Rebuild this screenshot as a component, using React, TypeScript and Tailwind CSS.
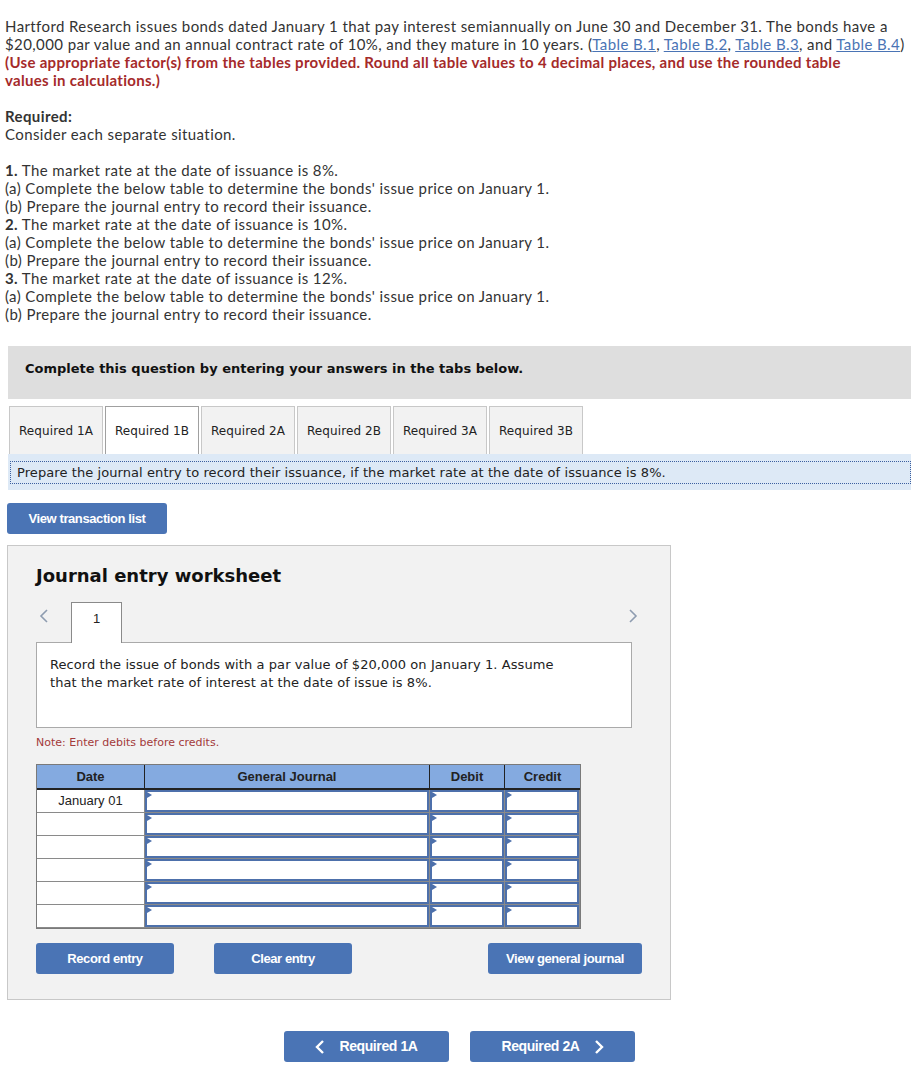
import React from 'react';

const tahoma = "font-['DejaVu_Sans',sans-serif]";
const narrow = "font-['Liberation_Sans_Narrow','Liberation_Sans',sans-serif]";

const tabs = ['Required 1A', 'Required 1B', 'Required 2A', 'Required 2B', 'Required 3A', 'Required 3B'];

const Chevron: React.FC<{ dir: 'left' | 'right'; color: string; w?: number }> = ({ dir, color, w = 1.6 }) => (
  <svg width="10" height="16" viewBox="0 0 10 16">
    <polyline
      points={dir === 'left' ? '8,2 2,8 8,14' : '2,2 8,8 2,14'}
      fill="none"
      stroke={color}
      strokeWidth={w}
    />
  </svg>
);

const InputCell: React.FC = () => (
  <div className="relative h-full border-r border-b border-[#8a8a8a] bg-white">
    <div className="h-full border-2 border-[#4d70ab]" />
    <span className="absolute top-[2px] left-[2px] w-0 h-0 border-y-[3px] border-y-transparent border-l-[5px] border-l-[#4d70ab]" />
  </div>
);

const BlueButton: React.FC<{ children: React.ReactNode; className?: string }> = ({ children, className = '' }) => (
  <button
    className={`h-[31px] rounded-[3px] bg-[#4a74b5] text-white text-[13px] tracking-[-0.4px] font-bold flex items-center justify-center ${narrow} ${className}`}
  >
    {children}
  </button>
);

const Link: React.FC<{ children: React.ReactNode }> = ({ children }) => (
  <span className="text-[#4a74b5] underline">{children}</span>
);

const App: React.FC = () => {
  return (
    <div className="w-[911px] min-h-[1072px] bg-white text-[#333] overflow-hidden">
      {/* question text */}
      <div className="pl-[5px] pt-[17px] font-['Lato',sans-serif] text-[15px] leading-[18px] tracking-[0.4px] whitespace-nowrap">
        <p>
          Hartford Research issues bonds dated January 1 that pay interest semiannually on June 30 and December 31. The bonds have a
          <br />
          $20,000 par value and an annual contract rate of 10%, and they mature in 10 years. <span>(</span>
          <Link>Table B.1</Link>, <Link>Table B.2</Link>, <Link>Table B.3</Link>, and <Link>Table B.4</Link>
          <span>)</span>
        </p>
        <p className="font-bold text-[#a52a2a] tracking-[0.3px]">
          (Use appropriate factor(s) from the tables provided. Round all table values to 4 decimal places, and use the rounded table
          <br />
          values in calculations.)
        </p>
        <p className="mt-[18px] font-bold">Required:</p>
        <p>Consider each separate situation.</p>
        <div className="mt-[18px]">
          <p><b>1.</b> The market rate at the date of issuance is 8%.</p>
          <p>(a) Complete the below table to determine the bonds' issue price on January 1.</p>
          <p>(b) Prepare the journal entry to record their issuance.</p>
          <p><b>2.</b> The market rate at the date of issuance is 10%.</p>
          <p>(a) Complete the below table to determine the bonds' issue price on January 1.</p>
          <p>(b) Prepare the journal entry to record their issuance.</p>
          <p><b>3.</b> The market rate at the date of issuance is 12%.</p>
          <p>(a) Complete the below table to determine the bonds' issue price on January 1.</p>
          <p>(b) Prepare the journal entry to record their issuance.</p>
        </div>
      </div>

      {/* instruction bar */}
      <div className={`mt-[23px] ml-[8px] h-[53px] bg-[#dedede] pl-[17px] pt-[13px] text-[13px] font-bold text-[#111] ${tahoma}`}>
        Complete this question by entering your answers in the tabs below.
      </div>

      {/* tabs */}
      <div className={`mt-[7px] ml-[9px] flex gap-[2px] ${tahoma}`}>
        {tabs.map((t) => (
          <div
            key={t}
            className={`w-[94px] h-[48px] flex items-center justify-center text-[12px] tracking-[0.1px] text-[#222] border border-b-0 ${
              t === 'Required 1B' ? 'bg-white border-[#a0a0a0]' : 'bg-[#f2f2f2] border-[#c8c8c8]'
            }`}
          >
            {t}
          </div>
        ))}
      </div>
      <div className={`ml-[8px] h-[36px] bg-[#dde9f6] pt-[7px] pl-[2px] ${tahoma}`}>
        <div className="h-[23px] border border-dotted border-[#3b5fa0] pl-[6px] text-[13px] leading-[21px] tracking-[0.08px] text-[#222] whitespace-nowrap">
          Prepare the journal entry to record their issuance, if the market rate at the date of issuance is 8%.
        </div>
      </div>

      <BlueButton className="mt-[13px] ml-[7px] w-[160px]">View transaction list</BlueButton>

      {/* worksheet */}
      <div className="mt-[11px] ml-[7px] w-[664px] h-[455px] border border-[#c8c8c8] bg-[#f2f2f2] pl-[28px] pt-[18px]">
        <h2 className={`text-[18px] leading-[24px] font-bold text-[#111] ${tahoma}`}>Journal entry worksheet</h2>

        <div className="mt-[14px] w-[602px] flex items-end">
          <div className="w-[35px] h-[40px] flex items-start pt-[6px] pl-[3px]">
            <Chevron dir="left" color="#8e9cb0" />
          </div>
          <div className="w-[51px] h-[41px] -mb-px relative z-10 bg-white border border-b-0 border-[#8a8a8a] flex justify-center pt-[6px] text-[13px] font-['Liberation_Sans',sans-serif] text-[#222]">
            1
          </div>
          <div className="flex-1 h-[40px] flex items-start pt-[6px] justify-end">
            <Chevron dir="right" color="#8e9cb0" />
          </div>
        </div>
        <div className={`w-[596px] h-[86px] bg-white border border-[#aaa] pl-[13px] pt-[13px] text-[13px] leading-[18px] tracking-[0.08px] text-[#222] whitespace-nowrap ${tahoma}`}>
          Record the issue of bonds with a par value of $20,000 on January 1. Assume
          <br />
          that the market rate of interest at the date of issue is 8%.
        </div>

        <p className={`mt-[8px] text-[11px] leading-[14px] text-[#a33a3a] ${tahoma}`}>Note: Enter debits before credits.</p>

        {/* journal table */}
        <div className="mt-[14px] w-[545px] border border-[#7a7a7a] font-['Liberation_Sans',sans-serif] text-[13px] text-[#222]">
          <div className="grid grid-cols-[108px_285px_75px_75px] h-[25px] bg-[#84aae0] border-b-2 border-[#222] font-bold">
            <div className="flex items-center justify-center border-r border-[#222]">Date</div>
            <div className="flex items-center justify-center border-r border-[#222]">General Journal</div>
            <div className="flex items-center justify-center border-r border-[#222]">Debit</div>
            <div className="flex items-center justify-center">Credit</div>
          </div>
          {[0, 1, 2, 3, 4, 5].map((i) => (
            <div key={i} className="grid grid-cols-[108px_285px_75px_75px] h-[23px]">
              <div className="flex items-center justify-center bg-white border-r border-b border-[#8a8a8a]">
                {i === 0 ? 'January 01' : ''}
              </div>
              <InputCell />
              <InputCell />
              <InputCell />
            </div>
          ))}
        </div>

        <div className="mt-[14px] w-[606px] flex">
          <BlueButton className="w-[138px]">Record entry</BlueButton>
          <BlueButton className="ml-[40px] w-[138px]">Clear entry</BlueButton>
          <BlueButton className="ml-auto w-[154px]">View general journal</BlueButton>
        </div>
      </div>

      {/* bottom navigation */}
      <div className="mt-[31px] pl-[284px] flex gap-[21px]">
        <BlueButton className="w-[165px] gap-[14px]">
          <Chevron dir="left" color="#fff" w={2.4} />
          <span className="text-[14px]">Required 1A</span>
        </BlueButton>
        <BlueButton className="w-[165px] gap-[14px]">
          <span className="text-[14px]">Required 2A</span>
          <Chevron dir="right" color="#fff" w={2.4} />
        </BlueButton>
      </div>
    </div>
  );
};

export default App;
